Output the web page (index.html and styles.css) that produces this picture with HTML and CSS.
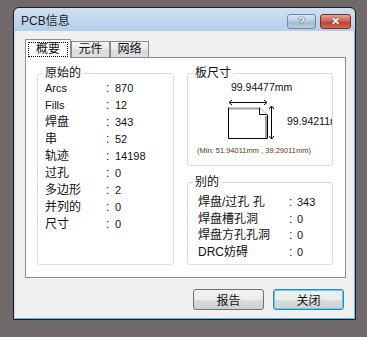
FILE: index.html
```html
<!DOCTYPE html>
<html>
<head>
	<meta charset="utf-8">
	<title>PCB信息</title>
	<link rel="stylesheet" href="styles.css">
</head>
<body>
	<div class="window">
		<div class="titlebar">
			<span class="title">PCB信息</span>
			<div class="caption-btns">
				<span class="cbtn help">?</span>
				<span class="cbtn close">✕</span>
			</div>
		</div>
		<div class="client">
			<div class="tabs">
				<span class="tab active"><span class="focus">概要</span></span>
				<span class="tab">元件</span>
				<span class="tab">网络</span>
			</div>
			<div class="panel">
				<fieldset class="group primitives">
					<legend>原始的</legend>
					<div class="rows">
						<span class="lat">Arcs</span><span>:</span><span class="v">870</span>
						<span class="lat">Fills</span><span>:</span><span class="v">12</span>
						<span>焊盘</span><span>:</span><span class="v">343</span>
						<span>串</span><span>:</span><span class="v">52</span>
						<span>轨迹</span><span>:</span><span class="v">14198</span>
						<span>过孔</span><span>:</span><span class="v">0</span>
						<span>多边形</span><span>:</span><span class="v">2</span>
						<span>并列的</span><span>:</span><span class="v">0</span>
						<span>尺寸</span><span>:</span><span class="v">0</span>
					</div>
				</fieldset>
				<div class="right-col">
					<fieldset class="group board">
						<legend>板尺寸</legend>
						<div class="dim-w">99.94477mm</div>
						<div class="drawing">
							<svg width="48" height="44" viewBox="0 0 48 44">
								<!-- width arrow -->
								<line x1="3" y1="5.5" x2="41" y2="5.5" stroke="#000" stroke-width="1"/>
								<path d="M6 3 L3 5.5 L6 8 M38 3 L41 5.5 L38 8" fill="none" stroke="#000" stroke-width="1"/>
								<!-- board outline -->
								<path d="M2.5 10.5 L2.5 41.5 L41.5 41.5 L41.5 18" fill="none" stroke="#000" stroke-width="1"/>
								<path d="M3 11.5 L33 11.5" stroke="#a0a0a0" stroke-width="2"/>
								<path d="M40 19 L40 41" stroke="#a0a0a0" stroke-width="2"/>
								<path d="M33.5 10.5 L33.5 17.5 L41.5 17.5" fill="none" stroke="#000" stroke-width="1"/>
								<path d="M34 10.5 L41 17.5" stroke="#b0b0b0" stroke-width="1"/>
								<!-- height arrow -->
								<line x1="45.5" y1="9" x2="45.5" y2="42" stroke="#000" stroke-width="1"/>
								<path d="M43 12 L45.5 9 L48 12 M43 39 L45.5 42 L48 39" fill="none" stroke="#000" stroke-width="1"/>
							</svg>
							<span class="dim-h">99.94211mm</span>
						</div>
						<div class="dim-min">(Min: 51.94011mm , 39.29011mm)</div>
					</fieldset>
					<fieldset class="group other">
						<legend>别的</legend>
						<div class="rows">
							<span>焊盘/过孔 孔</span><span>:</span><span class="v">343</span>
							<span>焊盘槽孔洞</span><span>:</span><span class="v">0</span>
							<span>焊盘方孔孔洞</span><span>:</span><span class="v">0</span>
							<span>DRC妨碍</span><span>:</span><span class="v">0</span>
						</div>
					</fieldset>
				</div>
			</div>
			<div class="actions">
				<button>报告</button>
				<button class="default">关闭</button>
			</div>
		</div>
	</div>
</body>
</html>
```

FILE: styles.css
```css
body {
	margin: 0;
	background-color: #6f6a69;
	font-family: "Liberation Sans", "Noto Sans CJK SC", sans-serif;
	font-size: 12px;
	color: #111;
}
.window {
	margin: 7px 0 0 13px;
	width: 341px;
	border: 1px solid #1c1c1c;
	border-radius: 6px 6px 0 0;
	background: linear-gradient(#cfe0f2, #b6cee9 23px, #b9d1ea);
}
.titlebar {
	height: 23px;
	display: flex;
	align-items: center;
	padding-left: 7px;
}
.title {
	font-size: 12px;
	color: #1e1e1e;
	flex: 1;
	line-height: 14px;
	margin-top: 2px;
}
.caption-btns {
	display: flex;
	gap: 4px;
	margin-right: 4px;
	margin-top: 3px;
}
.cbtn {
	height: 13px;
	border-radius: 3px;
	color: #fff;
	font-weight: bold;
	font-size: 11px;
	line-height: 13px;
	text-align: center;
	text-shadow: 0 0 1px #333, 0 0 1px #333;
}
.help {
	width: 27px;
	border: 1px solid #6f86a6;
	background: linear-gradient(#dbe7f4, #b4c9e2 50%, #9fb7d4 51%, #b8cde4);
}
.close {
	width: 29px;
	border: 1px solid #7b2b22;
	background: linear-gradient(#e4a497, #cc5d4c 50%, #bb3b29 51%, #d06a50);
}
.client {
	background-color: #f0f0f0;
	border-left: 1px solid #c9ddf1;
	border-right: 1px solid #52c3ea;
	border-bottom: 1px solid #52c3ea;
	padding: 8px 8px 8px 10px;
}
.tabs {
	display: flex;
	align-items: flex-end;
	height: 18px;
}
.tab {
	height: 15px;
	width: 37px;
	border: 1px solid #898c95;
	border-bottom: none;
	background: linear-gradient(#f6f6f6, #e8e8e8 50%, #d8d8d8 51%, #e0e0e0);
	text-align: center;
	line-height: 15px;
	font-size: 12px;
}
.tab.active {
	position: relative;
	width: 44px;
	height: 18px;
	margin-bottom: -1px;
	background: #fff;
	display: flex;
	align-items: center;
	justify-content: center;
}
.focus {
	border: 1px dotted #000;
	padding: 0 7px;
	line-height: 13px;
}
.panel {
	background: #fff;
	border: 1px solid #898c95;
	height: 199px;
	padding: 8px 12px 12px 11px;
	display: flex;
	gap: 13px;
}
.group {
	margin: 0;
	padding: 0;
	min-width: 0;
	border: 1px solid #d5dfe5;
	border-radius: 3px;
}
.group legend {
	padding: 0 2px;
	margin-left: 5px;
	font-size: 12px;
	line-height: 14px;
}
.primitives {
	width: 137px;
	flex-shrink: 0;
	box-sizing: border-box;
}
.rows {
	display: grid;
	line-height: 17px;
}
.primitives .rows {
	padding-left: 7px;
	grid-template-columns: 61px 9px auto;
}
.lat, .v {
	font-size: 11px;
}
.right-col {
	flex: 1;
	min-width: 0;
	display: flex;
	flex-direction: column;
	gap: 9px;
}
.board {
	height: 100px;
	box-sizing: border-box;
}
.dim-w {
	margin-left: 43px;
	line-height: 14px;
	font-size: 10.5px;
}
.drawing {
	display: flex;
	margin-top: 3px;
	padding-left: 38px;
	overflow: hidden;
	white-space: nowrap;
}
.drawing svg {
	flex-shrink: 0;
}
.dim-h {
	flex-shrink: 0;
	margin-left: 13px;
	font-size: 10.5px;
	line-height: 14px;
	padding-top: 17px;
}
.dim-min {
	margin: 4px 0 0 9px;
	font-size: 7.5px;
	line-height: 12px;
	color: #5c3512;
	white-space: nowrap;
}
.other {
	flex: 1;
}
.other .rows {
	padding: 5px 0 0 10px;
	grid-template-columns: 91px 8px auto;
	line-height: 16.5px;
}
.actions {
	display: flex;
	justify-content: flex-end;
	gap: 9px;
	margin-top: 11px;
	padding-right: 2px;
}
button {
	width: 71px;
	height: 21px;
	border: 1px solid #707070;
	border-radius: 3px;
	background: linear-gradient(#f2f2f2, #ebebeb 50%, #dddddd 51%, #cfcfcf);
	font-family: "Liberation Sans", "Noto Sans CJK SC", sans-serif;
	font-size: 12px;
	color: #111;
	padding: 0;
}
button.default {
	border-color: #3c7fb1;
	box-shadow: inset 0 0 0 1px #48d8fb;
}
```
